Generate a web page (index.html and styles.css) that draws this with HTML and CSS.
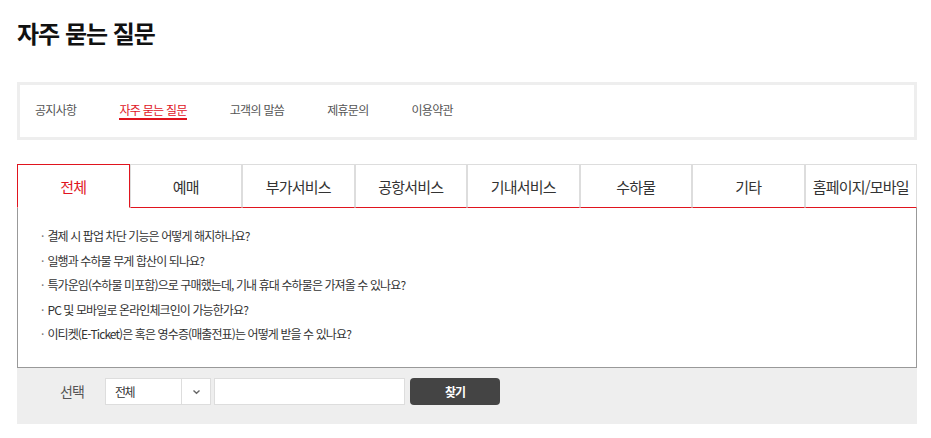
FILE: index.html
```html
<!DOCTYPE html>
<html lang="ko">
<head>
<meta charset="utf-8">
<title>자주 묻는 질문</title>
<link rel="stylesheet" href="styles.css">
</head>
<body>
<div class="page">
  <h1 class="title">자주 묻는 질문</h1>

  <nav class="subnav">
    <a class="subnav-item">공지사항</a>
    <a class="subnav-item active">자주 묻는 질문</a>
    <a class="subnav-item">고객의 말씀</a>
    <a class="subnav-item">제휴문의</a>
    <a class="subnav-item">이용약관</a>
  </nav>

  <div class="tabs">
    <div class="tab active">전체</div>
    <div class="tab">예매</div>
    <div class="tab">부가서비스</div>
    <div class="tab">공항서비스</div>
    <div class="tab">기내서비스</div>
    <div class="tab">수하물</div>
    <div class="tab">기타</div>
    <div class="tab">홈페이지/모바일</div>
  </div>

  <div class="faq">
    <ul class="faq-list">
      <li>결제 시 팝업 차단 기능은 어떻게 해지하나요?</li>
      <li>일행과 수하물 무게 합산이 되나요?</li>
      <li>특가운임(수하물 미포함)으로 구매했는데, 기내 휴대 수하물은 가져올 수 있나요?</li>
      <li>PC 및 모바일로 온라인체크인이 가능한가요?</li>
      <li>이티켓(E-Ticket)은 혹은 영수증(매출전표)는 어떻게 받을 수 있나요?</li>
    </ul>
  </div>

  <div class="search">
    <span class="search-label">선택</span>
    <div class="select">
      <span class="select-value">전체</span>
      <span class="select-arrow">
        <svg width="9" height="6" viewBox="0 0 9 6"><path d="M1.5 1.5 L4.5 4.3 L7.5 1.5" fill="none" stroke="#666" stroke-width="1.4"/></svg>
      </span>
    </div>
    <input class="search-input" type="text">
    <button class="search-btn">찾기</button>
  </div>
</div>
</body>
</html>
```

FILE: styles.css
```css
* { box-sizing: border-box; }
html, body { margin: 0; padding: 0; background: #fff; }
body {
  font-family: "Noto Sans CJK KR", "Noto Sans", sans-serif;
  color: #333;
}
.page {
  width: 900px;
  margin-left: 17px;
}
.title {
  margin: 0;
  padding-top: 16px;
  font-size: 24px;
  line-height: 34px;
  font-weight: 700;
  letter-spacing: -1px;
  color: #111;
}
.subnav {
  margin-top: 32px;
  height: 58px;
  border: 3px solid #eeeeee;
  display: flex;
  align-items: flex-start;
  gap: 43px;
  padding: 17px 0 0 15px;
}
.subnav-item {
  font-size: 12px;
  line-height: 16px;
  letter-spacing: -0.7px;
  color: #555;
  border-bottom: 2px solid transparent;
}
.subnav-item.active {
  color: #e0141e;
  border-bottom-color: #e0141e;
}
.tabs {
  margin-top: 24px;
  display: grid;
  grid-template-columns: repeat(8, 1fr);
  height: 44px;
}
.tab {
  border-top: 1px solid #dddddd;
  border-left: 1px solid #dddddd;
  border-right: 1px solid #dddddd;
  border-bottom: 1px solid #e0141e;
  display: flex;
  align-items: center;
  justify-content: center;
  font-size: 15px;
  letter-spacing: -0.8px;
  color: #333;
  white-space: nowrap;
}
.tab.active {
  border-color: #e0141e;
  border-bottom-color: transparent;
  color: #e0141e;
}
.faq {
  height: 160px;
  border-left: 1px solid #999;
  border-right: 1px solid #999;
  border-bottom: 1px solid #999;
  padding: 16px 0 0 23px;
}
.faq-list {
  list-style: none;
  margin: 0;
  padding: 0;
}
.faq-list li {
  font-size: 12px;
  line-height: 24.5px;
  letter-spacing: -0.9px;
  color: #333;
}
.faq-list li::before {
  content: "·";
  color: #777;
  margin-right: 4px;
}
.search {
  height: 56px;
  background: #eeeeee;
  display: flex;
  align-items: flex-start;
  padding: 10px 0 0 43px;
}
.search-label {
  font-size: 14px;
  line-height: 27px;
  letter-spacing: -1px;
  color: #555;
  width: 45px;
}
.select {
  width: 106px;
  height: 27px;
  background: #fff;
  border: 1px solid #dddddd;
  display: flex;
}
.select-value {
  flex: 1;
  font-size: 12px;
  line-height: 25px;
  letter-spacing: -1.5px;
  padding-left: 9px;
  color: #333;
}
.select-arrow {
  width: 29px;
  border-left: 1px solid #dddddd;
  display: flex;
  align-items: center;
  justify-content: center;
}
.search-input {
  margin: 0 0 0 3px;
  width: 191px;
  height: 27px;
  border: 1px solid #dddddd;
  background: #fff;
  padding: 0;
  outline: none;
}
.search-btn {
  margin-left: 5px;
  width: 90px;
  height: 27px;
  border: 0;
  border-radius: 4px;
  background: #444444;
  color: #fff;
  font-family: "Noto Sans CJK KR", sans-serif;
  font-size: 12px;
  font-weight: 700;
  letter-spacing: -1px;
  padding: 0;
}
```
